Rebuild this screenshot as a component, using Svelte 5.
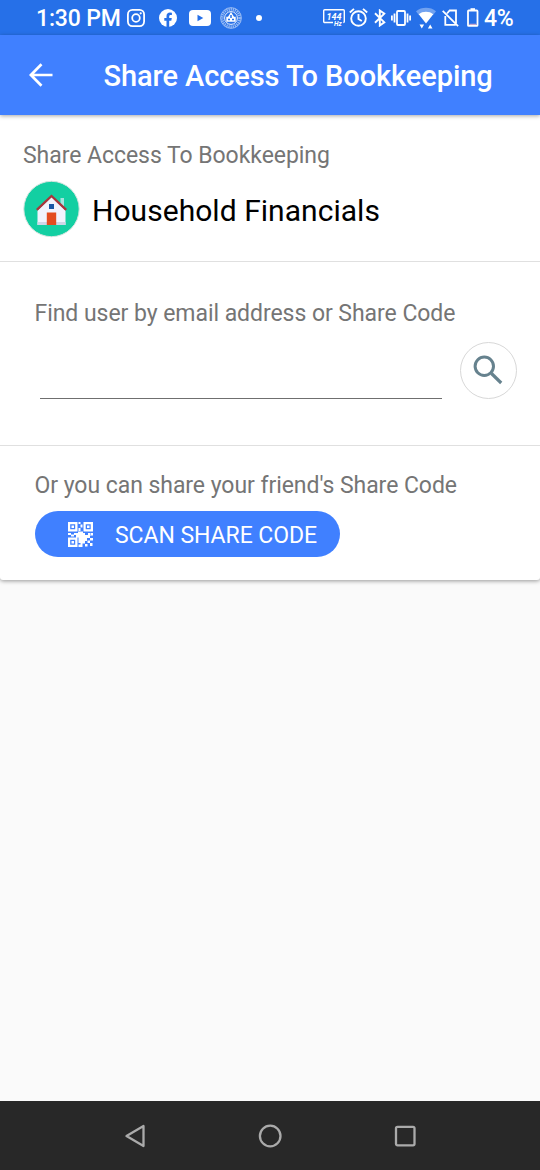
<script>
  const qr = [
    'M0 0h9.500v9.500H0zM2.200 2.200v5h5v-5z',
    'M15.500 0H25v9.500h-9.500zM17.700 2.200v5h5v-5z',
    'M0 15.500h9.500V25H0zM2.200 17.700v5h5v-5z',
    'M3.500 3.500h2.500v2.500h-2.500zM19 3.500h2.500v2.500H19zM3.500 19h2.500v2.500h-2.500z',
    'M10.500 0h2v2h-2zM12.500 2.500h2v3h-2zM10.500 6h2v3h-2zM0 11h3v2H0zM3 12.500h3v2H3zM6 11h4V9.500h5V11h2v2h3v-2h2.500v2H23v-2h2v2.500h-3V16h-3v3h-2v2.500h-2.500V25h-4v-2.500h2V21h-2v-5.500H8V13H6z',
    'M22 16h3v2.500h-3zM19.500 18.500H22V21h-2.500zM22 21h2.500v3H22zM17 22h2.500v2.500H17z'
  ].join('');
</script>

<div class="screen">
  <header class="status">
    <span class="clock">1:30 PM</span>
    <svg class="ig" width="18" height="18" viewBox="0 0 18 18" fill="none" stroke="#fff" stroke-width="1.800"><rect x=".9" y=".9" width="16.200" height="16.200" rx="4.500" /><circle cx="9" cy="9" r="3.800" /><circle cx="13.700" cy="4.300" r="1.100" fill="#fff" stroke="none" /></svg>
    <svg class="fb" width="18" height="18" viewBox="0 0 18 18"><circle cx="9" cy="9" r="9" fill="#fff" /><path d="M7.500 18v-6.300H5.300V9h2.200V7.200c0-2.400 1.300-3.600 3.500-3.600l1.900.2v2.300h-1.200c-1.100 0-1.500.6-1.500 1.400V9h2.600l-.5 2.700h-2.100V18z" fill="#2670e8" /></svg>
    <svg class="yt" width="22" height="16" viewBox="0 0 22 16"><rect width="22" height="16" rx="4" fill="#fff" /><path d="M8.500 4.700v6.600L14.300 8z" fill="#2670e8" /></svg>
    <svg class="seal" width="22" height="22" viewBox="0 0 22 22" fill="none" stroke="#fff"><circle cx="11" cy="11" r="10.400" stroke-width=".8" opacity=".65" /><circle cx="11" cy="11" r="8.600" stroke-width="2.600" stroke-dasharray="1.300 .8" opacity=".5" /><circle cx="11" cy="11" r="6.400" stroke-width=".9" /><path d="M11 5 8 9.800H6.300v5h9.400v-5H14z" fill="#fff" stroke="none" /><path d="M11 8v3M8 12.500h2M12 12.500h2" stroke="#2670e8" stroke-width="1.500" /></svg>
    <i class="dot"></i>
    <div class="system">
      <svg width="22" height="18" viewBox="0 0 22 18" fill="none" stroke="#fff" stroke-width="1.400"><path d="M10 13.500H1.700a1 1 0 0 1-1-1V1.700a1 1 0 0 1 1-1h18.600a1 1 0 0 1 1 1v10.800a1 1 0 0 1-1 1" /><text x="3.500" y="10.500" class="hz144">144</text><text x="11" y="16.500" class="hz">Hz</text></svg>
      <svg class="alarm" width="19" height="19" viewBox="0 0 19 19" fill="none" stroke="#fff" stroke-width="1.900"><circle cx="9.500" cy="10.500" r="7.300" /><path d="M9.500 6v5l3.300 2M.8 4.500 5 .9M18.200 4.500 14 .9" /></svg>
      <svg class="bt" width="12" height="18" viewBox="0 0 12 18" fill="none" stroke="#fff" stroke-width="1.900"><path d="m1 4.300 9.300 9-4.500 3.200v-15l4.500 3.200-9.300 9" /></svg>
      <svg class="vib" width="20" height="16" viewBox="0 0 20 16" fill="none" stroke="#fff" stroke-width="1.800"><rect x="6" y="1" width="8" height="14" rx="1" /><path d="M3.500 3.500v9M.9 5.500v5M16.500 3.500v9M19.100 5.500v5" /></svg>
      <svg class="wifi" width="20" height="22" viewBox="0 0 20 22" fill="#fff"><path d="M0 4.300C5.500-.3 14.500-.3 20 4.300l-2.700 3.400H2.700z" opacity=".35" /><path d="M2.700 7.300C6.500 4 13.500 4 17.300 7.300L10 16.500z" /><path d="M3.500 17.500h4.600l-2.300 4zM11.900 21.500h4.600l-2.300-4z" /></svg>
      <svg class="sim" width="17" height="18" viewBox="0 0 17 18" fill="none" stroke="#fff" stroke-width="1.800"><path d="M5 4.500 7.700 1.500H14v12.800M3.300 7v8.800h10.500M.7 1.900l15.400 15.300" /></svg>
      <svg class="bat" width="12" height="19" viewBox="0 0 12 19" fill="none" stroke="#fff" stroke-width="1.800"><rect x="1" y="2.500" width="9.500" height="15.400" rx=".7" /><path d="M3.500 1.200h4.500" stroke-width="2" /><path d="M2.300 16.300h7" stroke="#f0b6c5" stroke-width="1" /></svg>
      <span class="percent">4%</span>
    </div>
  </header>

  <nav class="appbar">
    <svg width="24" height="24" viewBox="0 0 24 24" fill="none" stroke="#fff" stroke-width="2.700"><path d="M23.500 12H2.500M12.500 1.300 1.900 12l10.600 10.700" /></svg>
    <h1><span>Share Access To Bookkeeping</span></h1>
  </nav>

  <main>
    <section class="book">
      <p class="label">Share Access To Bookkeeping</p>
      <div class="name">
        <svg width="57" height="58" viewBox="0.500 0 57 58"><circle cx="29" cy="29" r="27.700" fill="#13cfa2" stroke="#d5e5e0" stroke-width="1" /><path d="M38 18h3.500v11H38z" fill="#a5e3df" /><path d="m29 17 14 13.500V45H15V30.500z" fill="#f1f3fd" /><path d="M15 42h28v3H15z" fill="#cfd6e8" /><path d="M14.300 29.800 29 16l14.700 13.800" fill="none" stroke="#a9343b" stroke-width="2.300" /><path d="M26.500 24h5v5h-5z" fill="#1856a5" /><path d="M24.300 32.500h9.400V45h-9.400z" fill="#e34c20" /></svg>
        <strong>Household Financials</strong>
      </div>
    </section>
    <section class="find">
      <p class="label">Find user by email address or Share Code</p>
      <div class="search">
        <input aria-label="Email address or Share Code" />
        <button class="go" aria-label="Search"><svg width="30" height="30" viewBox="0 0 30 30" fill="none" stroke="#66828e"><circle cx="11.300" cy="11.300" r="9.200" stroke-width="3" /><path d="m18.500 18.500 9.700 9.500" stroke-width="3.200" /></svg></button>
      </div>
    </section>
    <section class="scan">
      <p class="label">Or you can share your friend's Share Code</p>
      <button class="scanbtn"><svg width="25" height="25" viewBox="0 0 25 25" fill="#fff" fill-rule="evenodd"><path d={qr} /></svg><span>SCAN SHARE CODE</span></button>
    </section>
  </main>

  <footer>
    <svg width="24" height="24" viewBox="0 0 24 24"><path d="M20.500 2v20L3.500 12z" /></svg>
    <svg width="24" height="24" viewBox="0 0 24 24"><circle cx="12.200" cy="12" r="10.300" /></svg>
    <svg width="24" height="24" viewBox="0 0 24 24"><rect x="3" y="2.800" width="18.500" height="18.500" rx="1.500" /></svg>
  </footer>
</div>

<style>
  :global(body) { margin: 0; }
  * { box-sizing: border-box; }
  .screen { width: 540px; height: 1170px; display: flex; flex-direction: column; background: #fafafa; font-family: Roboto, sans-serif; overflow: hidden; }
  svg { display: block; flex: none; }
  span, strong, p { white-space: nowrap; }
  .status { height: 35px; flex: none; display: flex; align-items: center; padding: 0 26px 0 36px; background: #2670e8; color: #fff; font-size: 23px; font-weight: 500; }
  .clock { width: 91px; padding-top: 1px; letter-spacing: -.15px; }
  .fb { margin-left: 13.500px; }
  .yt { margin-left: 12px; }
  .seal { margin-left: 9px; }
  .dot { width: 6px; height: 6px; border-radius: 50%; background: #fff; margin-left: 14px; }
  .system { display: flex; align-items: center; margin-left: auto; width: 191px; }
  .hz144 { font: italic 700 9px Roboto, sans-serif; fill: #fff; stroke: none; }
  .hz { font: italic 700 6.500px Roboto, sans-serif; fill: #fff; stroke: none; }
  .alarm { margin-left: 4px; }
  .bt { margin-left: 6px; }
  .vib { margin-left: 5px; }
  .wifi { margin-left: 5px; }
  .sim { margin-left: 6px; }
  .bat { margin-left: 7.500px; }
  .percent { margin-left: 5.500px; padding-top: 1px; letter-spacing: -.3px; }
  .appbar { height: 80px; flex: none; display: flex; align-items: center; padding-left: 28.500px; background: #4080ff; color: #fff; box-shadow: 0 1px 4px rgba(0, 0, 0, .35); z-index: 1; }
  h1 { margin: 2px 0 0 51px; font-size: 29px; line-height: 34px; font-weight: 500; letter-spacing: -.08px; }
  main { height: 465px; flex: none; background: #fff; border-radius: 0 0 3px 3px; box-shadow: 0 1px 4px rgba(0, 0, 0, .4); }
  p { margin: 0; }
  .label { color: #757575; font-size: 23px; line-height: 28px; letter-spacing: -.05px; }
  .book { height: 147px; padding: 27px 23px 0; border-bottom: 1px solid #e0e0e0; }
  .name { display: flex; align-items: center; margin-top: 10px; gap: 12px; }
  strong { font-size: 30px; line-height: 36px; font-weight: 400; padding-top: 3px; color: #000; letter-spacing: .04px; }
  .find { height: 184px; padding: 38px 23px 0 34.500px; border-bottom: 1px solid #e0e0e0; }
  .search { display: flex; align-items: flex-start; justify-content: space-between; margin-top: 14px; padding-left: 5.500px; }
  input { width: 402px; height: 57px; padding: 0; border: 0; border-bottom: 1px solid #6f6f6f; background: none; outline: 0; border-radius: 0; }
  .go { width: 57px; height: 57px; border: 1px solid #d8d8d8; border-radius: 50%; background: #fff; display: flex; align-items: center; justify-content: center; padding: 0 1.500px 1px 0; }
  .scan { padding: 26px 34.500px 0; }
  .scanbtn { display: flex; align-items: center; width: 305.500px; height: 46px; margin-top: 11px; padding: 0 0 0 33.500px; gap: 22px; border: 0; border-radius: 23px; background: #4080ff; color: #fff; font: 400 23px Roboto, sans-serif; letter-spacing: -.06px; }
  .scanbtn span { padding-top: 2px; }
  footer { height: 69px; margin-top: auto; background: #282828; display: flex; align-items: center; justify-content: center; gap: 111px; }
  footer svg { fill: none; stroke: #aaa; stroke-width: 2.300; stroke-linejoin: round; }
</style>
